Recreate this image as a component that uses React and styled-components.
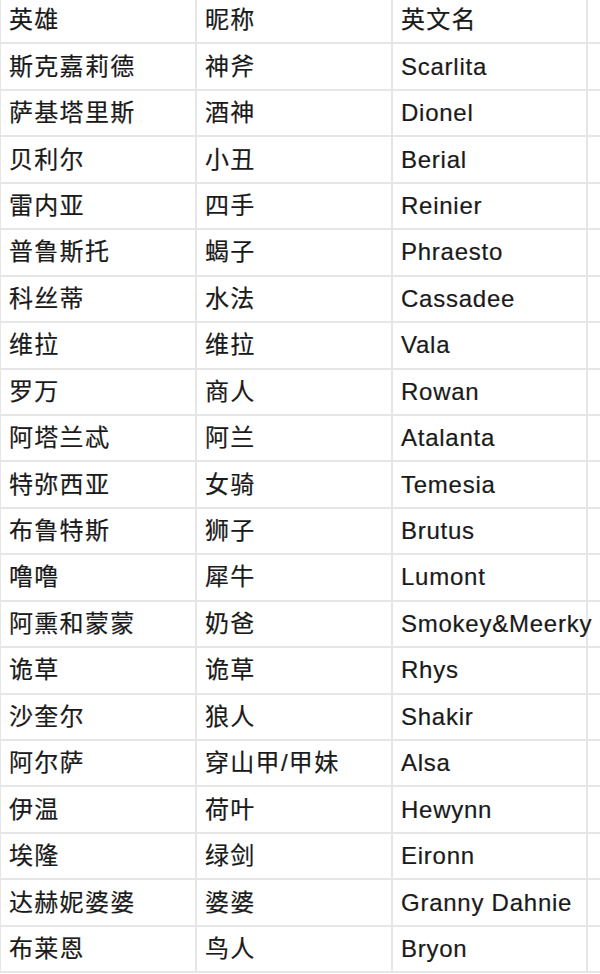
import React from "react";
import styled, { createGlobalStyle } from "styled-components";

const Global = createGlobalStyle`
  html, body { margin: 0; padding: 0; background: #fff; }
  body { overflow: hidden; }
`;

const Viewport = styled.div`
  width: 600px;
  height: 974px;
  overflow: hidden;
  background: #fff;
`;

const Table = styled.table`
  border-collapse: collapse;
  table-layout: fixed;
  margin-top: -4px;
  margin-left: -1px;
  width: 790px;
  font-family: "Liberation Sans", Arial, "Noto Sans CJK SC", sans-serif;
  font-size: 24px;
  color: #1a1a1a;
`;

const Col = styled.col`
  width: ${(p) => p.$w}px;
`;

const Row = styled.tr`
  height: 46.45px;
`;

const Cell = styled.td`
  border: 2px solid #e6e6e6;
  padding: 0 0 0 8px;
  white-space: nowrap;
  vertical-align: middle;
  letter-spacing: ${(p) => (p.$cjk ? "1.3px" : "0.75px")};
  line-height: 1;
  -webkit-text-stroke: 0.2px #1a1a1a;
`;

const rows = [
  ["英雄", "昵称", "英文名"],
  ["斯克嘉莉德", "神斧", "Scarlita"],
  ["萨基塔里斯", "酒神", "Dionel"],
  ["贝利尔", "小丑", "Berial"],
  ["雷内亚", "四手", "Reinier"],
  ["普鲁斯托", "蝎子", "Phraesto"],
  ["科丝蒂", "水法", "Cassadee"],
  ["维拉", "维拉", "Vala"],
  ["罗万", "商人", "Rowan"],
  ["阿塔兰忒", "阿兰", "Atalanta"],
  ["特弥西亚", "女骑", "Temesia"],
  ["布鲁特斯", "狮子", "Brutus"],
  ["噜噜", "犀牛", "Lumont"],
  ["阿熏和蒙蒙", "奶爸", "Smokey&Meerky"],
  ["诡草", "诡草", "Rhys"],
  ["沙奎尔", "狼人", "Shakir"],
  ["阿尔萨", "穿山甲/甲妹", "Alsa"],
  ["伊温", "荷叶", "Hewynn"],
  ["埃隆", "绿剑", "Eironn"],
  ["达赫妮婆婆", "婆婆", "Granny Dahnie"],
  ["布莱恩", "鸟人", "Bryon"],
];

export default function App() {
  return (
    <Viewport>
      <Global />
      <Table>
        <colgroup>
          <Col $w={196} />
          <Col $w={196} />
          <Col $w={195} />
          <Col $w={203} />
        </colgroup>
        <tbody>
          {rows.map((r, i) => (
            <Row key={i}>
              <Cell $cjk>{r[0]}</Cell>
              <Cell $cjk>{r[1]}</Cell>
              <Cell $cjk={i === 0}>{r[2]}</Cell>
              <Cell />
            </Row>
          ))}
        </tbody>
      </Table>
    </Viewport>
  );
}
